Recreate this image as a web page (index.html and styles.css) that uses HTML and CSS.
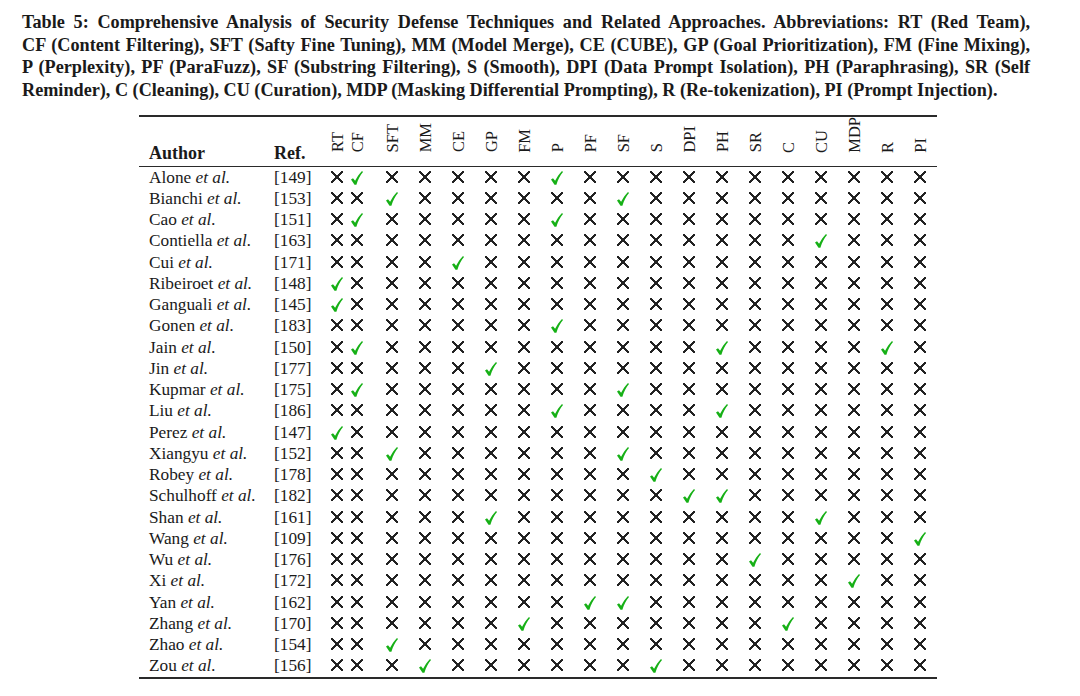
FILE: index.html
```html
<!DOCTYPE html>
<html>
<head>
<meta charset="utf-8">
<link rel="stylesheet" href="styles.css">
</head>
<body>
<svg class="defs" width="0" height="0">
  <symbol id="ck" viewBox="0 0 12 14">
    <path d="M0 8.6 L2 7.2 L4.1 9.8 C5.9 6.2 8.3 2.8 11 0 L12 1.1 C9.3 4.2 7.1 8.1 5.4 13.8 L3.5 13.8 Z"/>
  </symbol>
</svg>
<p class="caption"><span class="ln">Table 5: Comprehensive Analysis of Security Defense Techniques and Related Approaches. Abbreviations: RT (Red Team),</span> <span class="ln">CF (Content Filtering), SFT (Safty Fine Tuning), MM (Model Merge), CE (CUBE), GP (Goal Prioritization), FM (Fine Mixing),</span> <span class="ln">P (Perplexity), PF (ParaFuzz), SF (Substring Filtering), S (Smooth), DPI (Data Prompt Isolation), PH (Paraphrasing), SR (Self</span> <span class="ln last">Reminder), C (Cleaning), CU (Curation), MDP (Masking Differential Prompting), R (Re-tokenization), PI (Prompt Injection).</span></p>
<div class="wrap">
<table class="tbl">
<colgroup>
<col class="c-author"><col class="c-ref"><col class="c-n"><col class="c-n"><col class="c-sft">
<col class="c-m"><col class="c-m"><col class="c-m"><col class="c-m"><col class="c-m"><col class="c-m"><col class="c-m"><col class="c-m">
<col class="c-m"><col class="c-m"><col class="c-m"><col class="c-m"><col class="c-m"><col class="c-m"><col class="c-m">
</colgroup>
<thead>
<tr>
<th class="h-author">Author</th><th class="h-ref">Ref.</th>
<th><span class="v">RT</span></th><th><span class="v">CF</span></th><th class="sft"><span class="v">SFT</span></th>
<th><span class="v">MM</span></th><th><span class="v">CE</span></th><th><span class="v">GP</span></th><th><span class="v">FM</span></th>
<th><span class="v">P</span></th><th><span class="v">PF</span></th><th><span class="v">SF</span></th><th><span class="v">S</span></th>
<th><span class="v">DPI</span></th><th><span class="v">PH</span></th><th><span class="v">SR</span></th><th><span class="v">C</span></th>
<th><span class="v">CU</span></th><th><span class="v">MDP</span></th><th><span class="v">R</span></th><th><span class="v">PI</span></th>
</tr>
</thead>
<tbody>
<tr><td>Alone <i>et al.</i></td><td>[149]</td><td></td><td class="y"><svg><use href="#ck"/></svg></td><td></td><td></td><td></td><td></td><td></td><td class="y"><svg><use href="#ck"/></svg></td><td></td><td></td><td></td><td></td><td></td><td></td><td></td><td></td><td></td><td></td><td></td></tr>
<tr><td>Bianchi <i>et al.</i></td><td>[153]</td><td></td><td></td><td class="y"><svg><use href="#ck"/></svg></td><td></td><td></td><td></td><td></td><td></td><td></td><td class="y"><svg><use href="#ck"/></svg></td><td></td><td></td><td></td><td></td><td></td><td></td><td></td><td></td><td></td></tr>
<tr><td>Cao <i>et al.</i></td><td>[151]</td><td></td><td class="y"><svg><use href="#ck"/></svg></td><td></td><td></td><td></td><td></td><td></td><td class="y"><svg><use href="#ck"/></svg></td><td></td><td></td><td></td><td></td><td></td><td></td><td></td><td></td><td></td><td></td><td></td></tr>
<tr><td>Contiella <i>et al.</i></td><td>[163]</td><td></td><td></td><td></td><td></td><td></td><td></td><td></td><td></td><td></td><td></td><td></td><td></td><td></td><td></td><td></td><td class="y"><svg><use href="#ck"/></svg></td><td></td><td></td><td></td></tr>
<tr><td>Cui <i>et al.</i></td><td>[171]</td><td></td><td></td><td></td><td></td><td class="y"><svg><use href="#ck"/></svg></td><td></td><td></td><td></td><td></td><td></td><td></td><td></td><td></td><td></td><td></td><td></td><td></td><td></td><td></td></tr>
<tr><td>Ribeiroet <i>et al.</i></td><td>[148]</td><td class="y"><svg><use href="#ck"/></svg></td><td></td><td></td><td></td><td></td><td></td><td></td><td></td><td></td><td></td><td></td><td></td><td></td><td></td><td></td><td></td><td></td><td></td><td></td></tr>
<tr><td>Ganguali <i>et al.</i></td><td>[145]</td><td class="y"><svg><use href="#ck"/></svg></td><td></td><td></td><td></td><td></td><td></td><td></td><td></td><td></td><td></td><td></td><td></td><td></td><td></td><td></td><td></td><td></td><td></td><td></td></tr>
<tr><td>Gonen <i>et al.</i></td><td>[183]</td><td></td><td></td><td></td><td></td><td></td><td></td><td></td><td class="y"><svg><use href="#ck"/></svg></td><td></td><td></td><td></td><td></td><td></td><td></td><td></td><td></td><td></td><td></td><td></td></tr>
<tr><td>Jain <i>et al.</i></td><td>[150]</td><td></td><td class="y"><svg><use href="#ck"/></svg></td><td></td><td></td><td></td><td></td><td></td><td></td><td></td><td></td><td></td><td></td><td class="y"><svg><use href="#ck"/></svg></td><td></td><td></td><td></td><td></td><td class="y"><svg><use href="#ck"/></svg></td><td></td></tr>
<tr><td>Jin <i>et al.</i></td><td>[177]</td><td></td><td></td><td></td><td></td><td></td><td class="y"><svg><use href="#ck"/></svg></td><td></td><td></td><td></td><td></td><td></td><td></td><td></td><td></td><td></td><td></td><td></td><td></td><td></td></tr>
<tr><td>Kupmar <i>et al.</i></td><td>[175]</td><td></td><td class="y"><svg><use href="#ck"/></svg></td><td></td><td></td><td></td><td></td><td></td><td></td><td></td><td class="y"><svg><use href="#ck"/></svg></td><td></td><td></td><td></td><td></td><td></td><td></td><td></td><td></td><td></td></tr>
<tr><td>Liu <i>et al.</i></td><td>[186]</td><td></td><td></td><td></td><td></td><td></td><td></td><td></td><td class="y"><svg><use href="#ck"/></svg></td><td></td><td></td><td></td><td></td><td class="y"><svg><use href="#ck"/></svg></td><td></td><td></td><td></td><td></td><td></td><td></td></tr>
<tr><td>Perez <i>et al.</i></td><td>[147]</td><td class="y"><svg><use href="#ck"/></svg></td><td></td><td></td><td></td><td></td><td></td><td></td><td></td><td></td><td></td><td></td><td></td><td></td><td></td><td></td><td></td><td></td><td></td><td></td></tr>
<tr><td>Xiangyu <i>et al.</i></td><td>[152]</td><td></td><td></td><td class="y"><svg><use href="#ck"/></svg></td><td></td><td></td><td></td><td></td><td></td><td></td><td class="y"><svg><use href="#ck"/></svg></td><td></td><td></td><td></td><td></td><td></td><td></td><td></td><td></td><td></td></tr>
<tr><td>Robey <i>et al.</i></td><td>[178]</td><td></td><td></td><td></td><td></td><td></td><td></td><td></td><td></td><td></td><td></td><td class="y"><svg><use href="#ck"/></svg></td><td></td><td></td><td></td><td></td><td></td><td></td><td></td><td></td></tr>
<tr><td>Schulhoff <i>et al.</i></td><td>[182]</td><td></td><td></td><td></td><td></td><td></td><td></td><td></td><td></td><td></td><td></td><td></td><td class="y"><svg><use href="#ck"/></svg></td><td class="y"><svg><use href="#ck"/></svg></td><td></td><td></td><td></td><td></td><td></td><td></td></tr>
<tr><td>Shan <i>et al.</i></td><td>[161]</td><td></td><td></td><td></td><td></td><td></td><td class="y"><svg><use href="#ck"/></svg></td><td></td><td></td><td></td><td></td><td></td><td></td><td></td><td></td><td></td><td class="y"><svg><use href="#ck"/></svg></td><td></td><td></td><td></td></tr>
<tr><td>Wang <i>et al.</i></td><td>[109]</td><td></td><td></td><td></td><td></td><td></td><td></td><td></td><td></td><td></td><td></td><td></td><td></td><td></td><td></td><td></td><td></td><td></td><td></td><td class="y"><svg><use href="#ck"/></svg></td></tr>
<tr><td>Wu <i>et al.</i></td><td>[176]</td><td></td><td></td><td></td><td></td><td></td><td></td><td></td><td></td><td></td><td></td><td></td><td></td><td></td><td class="y"><svg><use href="#ck"/></svg></td><td></td><td></td><td></td><td></td><td></td></tr>
<tr><td>Xi <i>et al.</i></td><td>[172]</td><td></td><td></td><td></td><td></td><td></td><td></td><td></td><td></td><td></td><td></td><td></td><td></td><td></td><td></td><td></td><td></td><td class="y"><svg><use href="#ck"/></svg></td><td></td><td></td></tr>
<tr><td>Yan <i>et al.</i></td><td>[162]</td><td></td><td></td><td></td><td></td><td></td><td></td><td></td><td></td><td class="y"><svg><use href="#ck"/></svg></td><td class="y"><svg><use href="#ck"/></svg></td><td></td><td></td><td></td><td></td><td></td><td></td><td></td><td></td><td></td></tr>
<tr><td>Zhang <i>et al.</i></td><td>[170]</td><td></td><td></td><td></td><td></td><td></td><td></td><td class="y"><svg><use href="#ck"/></svg></td><td></td><td></td><td></td><td></td><td></td><td></td><td></td><td class="y"><svg><use href="#ck"/></svg></td><td></td><td></td><td></td><td></td></tr>
<tr><td>Zhao <i>et al.</i></td><td>[154]</td><td></td><td></td><td class="y"><svg><use href="#ck"/></svg></td><td></td><td></td><td></td><td></td><td></td><td></td><td></td><td></td><td></td><td></td><td></td><td></td><td></td><td></td><td></td><td></td></tr>
<tr><td>Zou <i>et al.</i></td><td>[156]</td><td></td><td></td><td></td><td class="y"><svg><use href="#ck"/></svg></td><td></td><td></td><td></td><td></td><td></td><td></td><td class="y"><svg><use href="#ck"/></svg></td><td></td><td></td><td></td><td></td><td></td><td></td><td></td><td></td></tr>
</tbody>
</table>
</div>
</body>
</html>
```

FILE: styles.css
```css
html, body {
  margin: 0;
  padding: 0;
  background: #ffffff;
}
body {
  width: 1080px;
  height: 696px;
  overflow: hidden;
  font-family: "Liberation Serif", "Times New Roman", serif;
  color: #1a1a1a;
}
.defs {
  position: absolute;
  width: 0;
  height: 0;
}
.caption {
  margin: 0;
  width: 1008px;
  padding: 11px 0 0 22px;
  font-weight: bold;
  font-size: 18.2px;
  line-height: 22.7px;
}
.caption .ln {
  display: block;
  white-space: nowrap;
  text-align: justify;
  text-align-last: justify;
}
.caption .ln.last {
  text-align-last: left;
}
.wrap {
  padding: 13px 0 0 139px;
}
.tbl {
  border-collapse: collapse;
  table-layout: fixed;
  width: 797.5px;
  border-top: 2px solid #2a2a2a;
  border-bottom: 2px solid #2a2a2a;
}
.c-author { width: 131px; }
.c-ref { width: 57px; }
.c-n { width: 20px; }
.c-sft { width: 41.5px; }
.c-m { width: 33px; }

.tbl thead tr {
  height: 48px;
  border-bottom: 1px solid #2a2a2a;
}
.tbl th {
  padding: 0 0 13px 0;
  vertical-align: bottom;
  text-align: center;
  font-weight: normal;
  font-size: 16.5px;
  line-height: 0;
}
.tbl th.sft {
  padding-left: 8.5px;
}
.tbl th.h-author,
.tbl th.h-ref {
  font-weight: bold;
  font-size: 18px;
  line-height: 20px;
  text-align: left;
  padding-bottom: 3px;
}
.tbl th.h-author { padding-left: 10px; }
.tbl th.h-ref { padding-left: 4px; }
.v {
  display: inline-block;
  vertical-align: bottom;
  writing-mode: vertical-rl;
  transform: rotate(180deg);
  line-height: 17px;
}
.tbl td {
  height: 21.25px;
  padding: 0;
  font-size: 17.3px;
  line-height: 21px;
  text-align: center;
  vertical-align: middle;
}
.tbl td:nth-child(1) {
  text-align: left;
  padding-left: 10px;
  white-space: nowrap;
}
.tbl td:nth-child(2) {
  text-align: left;
  padding-left: 4px;
}
.tbl td:nth-child(5) {
  padding-left: 8.5px;
}
.tbl td:nth-child(n+3):not(.y)::before {
  content: "";
  display: inline-block;
  width: 12px;
  height: 12px;
  vertical-align: middle;
  position: relative;
  top: -2px;
  background:
    linear-gradient(45deg, transparent 44%, #222 44%, #222 56%, transparent 56%),
    linear-gradient(-45deg, transparent 44%, #222 44%, #222 56%, transparent 56%);
}
.tbl td.y svg {
  display: inline-block;
  width: 12px;
  height: 14px;
  vertical-align: middle;
  position: relative;
  top: -1px;
  fill: #16b016;
}
```
